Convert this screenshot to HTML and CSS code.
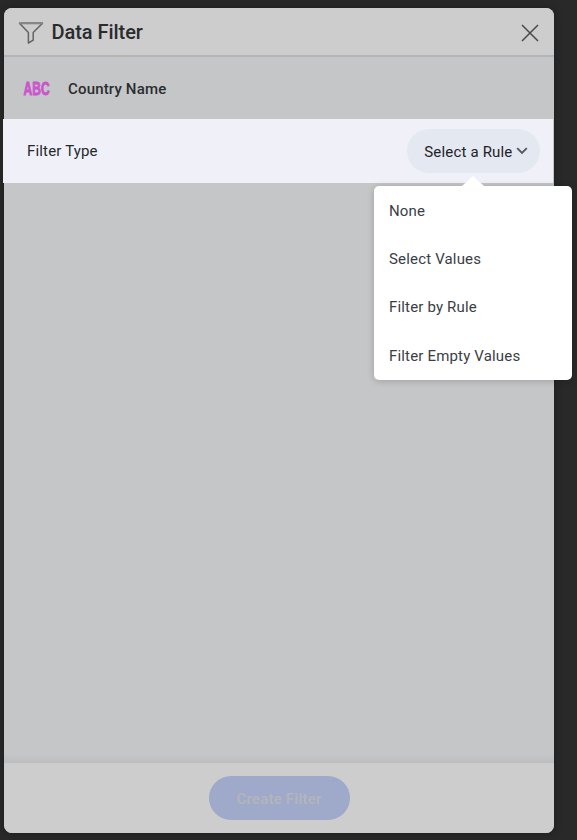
FILE: index.html
```html
<!DOCTYPE html>
<html lang="en">
<head>
<meta charset="utf-8">
<title>Data Filter</title>
<link rel="stylesheet" href="styles.css">
</head>
<body>
<main class="panel">
  <header class="header">
    <svg class="funnel" width="26" height="24" viewBox="0 0 26 24" fill="none" stroke="#626467" stroke-width="1.5" stroke-linejoin="round">
      <path d="M1.5 2.2h23L15.2 11.5v7.7L10.4 22v-10.500z"/>
      <path d="M1 2.2h24" stroke="#858688" stroke-width="2.2"/>
    </svg>
    <h1 class="title">Data Filter</h1>
    <svg class="close" width="18" height="18" viewBox="0 0 18 18" fill="none" stroke="#45484c" stroke-width="1.5">
      <path d="M1 1l16 16M17 1L1 17"/>
    </svg>
  </header>
  <section class="field">
    <span class="type"><span class="type-text">ABC</span></span>
    <span class="field-name">Country Name</span>
  </section>
  <section class="rule-row">
    <span class="rule-label">Filter Type</span>
    <div class="select">
      <button class="select-button">Select a Rule
        <svg width="12" height="8" viewBox="0 0 12 8" fill="none" stroke="#55585e" stroke-width="1.9"><path d="M1.2 1.2L6 6l4.8-4.8"/></svg>
      </button>
      <ul class="menu">
        <li>None</li>
        <li>Select Values</li>
        <li>Filter by Rule</li>
        <li>Filter Empty Values</li>
      </ul>
    </div>
  </section>
  <div class="body"></div>
  <footer class="footer"><button class="create">Create Filter</button></footer>
</main>
</body>
</html>
```
FILE: styles.css
```css
* { box-sizing: border-box; }
body {
  margin: 0;
  height: 840px;
  padding: 8px 23px 7px 4px;
  overflow: hidden;
  background: #292929;
  font-family: Roboto, "Liberation Sans", sans-serif;
  font-size: 15px;
  letter-spacing: .17px;
  color: #25282c;
}
.panel {
  height: 825px;
  display: flex;
  flex-direction: column;
  border-radius: 8px;
  background: #c5c6c8;
  box-shadow: 0 0 7px #1d1d1d;
}
.header {
  height: 49px;
  flex: none;
  display: flex;
  align-items: center;
  padding: 0 15px 0 14px;
  border-bottom: 2px solid #b4b5b7;
  border-radius: 8px 8px 0 0;
  background: #cdcdcd;
}
.funnel { margin-top: 3px; }
.title {
  margin: 1px auto 0 7.5px;
  font-size: 20px;
  line-height: 24px;
  letter-spacing: -.05px;
  font-weight: 500;
  color: #292b2d;
}
.close { margin-top: 3px; }
.field {
  height: 62px;
  flex: none;
  display: flex;
  align-items: center;
  padding: 2px 0 0 19px;
}
.type {
  width: 28px;
  height: 24px;
}
.type-text {
  display: inline-block;
  font: bold 19px/24px "Liberation Sans", sans-serif;
  letter-spacing: 0;
  color: #ca55cc;
  -webkit-text-stroke: .9px #ca55cc;
  transform: translateX(.5px) scaleX(.635);
  transform-origin: 0 50%;
}
.field-name {
  margin-left: 17px;
  font-weight: 500;
  color: #2b2d30;
}
.rule-row {
  height: 64px;
  flex: none;
  display: flex;
  align-items: center;
  justify-content: space-between;
  margin: 0 1px 0 -1px;
  padding: 0 13px 0 24px;
  background: #f0f1f8;
}
.select { position: relative; }
button { border: 0; font: inherit; letter-spacing: inherit; }
.select-button {
  display: flex;
  align-items: center;
  gap: 4px;
  width: 133px;
  height: 44px;
  padding: 2px 0 0 17.3px;
  border-radius: 22px;
  background: #e3e8f1;
  color: #1f2226;
  white-space: nowrap;
}
.select-button svg { margin-top: -2px; }
.menu {
  position: absolute;
  z-index: 1;
  top: 57px;
  right: -32px;
  width: 198px;
  height: 194px;
  margin: 0;
  padding: 1px 0 0 15px;
  list-style: none;
  border-radius: 5px;
  background: #fff;
  color: #3b3e44;
  box-shadow: 0 1px 7px rgba(0, 0, 0, .2);
}
.menu::before {
  content: "";
  position: absolute;
  top: -10px;
  left: 88px;
  width: 22px;
  height: 10px;
  background: #fff;
  clip-path: polygon(50% 0, 100% 100%, 0 100%);
}
.menu li { height: 48.2px; line-height: 48px; }
.body {
  flex: 1;
  background: linear-gradient(to top, #bcbdbf, #c5c6c8 9px);
}
.footer {
  height: 70px;
  flex: none;
  display: flex;
  justify-content: center;
  align-items: center;
  border-radius: 0 0 8px 8px;
  background: #cdcdcd;
}
.create {
  width: 141px;
  height: 44px;
  padding: 2px 0 0;
  border-radius: 22px;
  background: #9fa9c9;
  color: #b3b5bb;
  font-weight: 600;
  letter-spacing: .2px;
}
```
